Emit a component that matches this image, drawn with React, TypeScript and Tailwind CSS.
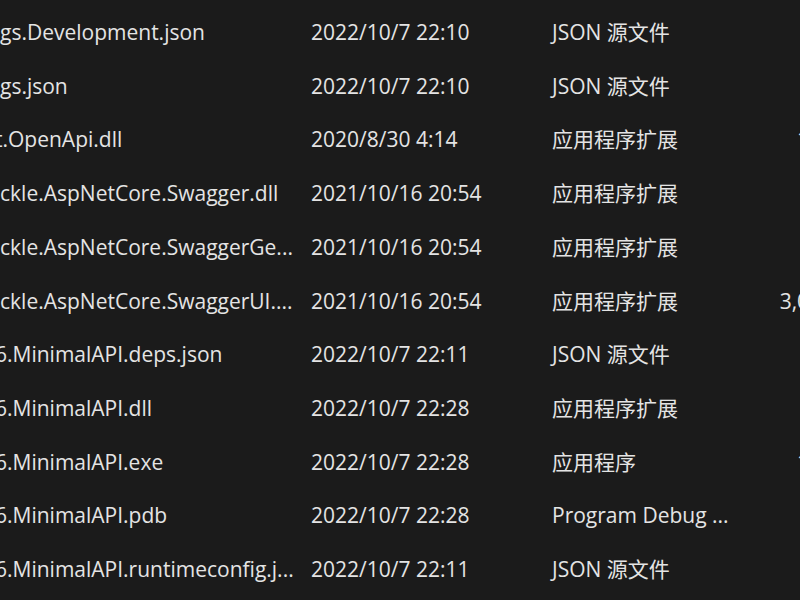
const rows = [
  { name: 'gs.Development.json', shift: 'ml-0', date: '2022/10/7 22:10', type: 'JSON 源文件', size: '1 KB' },
  { name: 'gs.json', shift: 'ml-0', date: '2022/10/7 22:10', type: 'JSON 源文件', size: '1 KB' },
  { name: 't.OpenApi.dll', shift: '-ml-[5px]', date: '2020/8/30 4:14', type: '应用程序扩展', size: '170 KB' },
  { name: 'ckle.AspNetCore.Swagger.dll', shift: 'ml-0', date: '2021/10/16 20:54', type: '应用程序扩展', size: '18 KB' },
  { name: 'ckle.AspNetCore.SwaggerGe...', shift: 'ml-0', date: '2021/10/16 20:54', type: '应用程序扩展', size: '89 KB' },
  { name: 'ckle.AspNetCore.SwaggerUI....', shift: 'ml-0', date: '2021/10/16 20:54', type: '应用程序扩展', size: '3,023 KB' },
  { name: '6.MinimalAPI.deps.json', shift: '-ml-[5px]', date: '2022/10/7 22:11', type: 'JSON 源文件', size: '3 KB' },
  { name: '6.MinimalAPI.dll', shift: '-ml-[5px]', date: '2022/10/7 22:28', type: '应用程序扩展', size: '12 KB' },
  { name: '6.MinimalAPI.exe', shift: '-ml-[5px]', date: '2022/10/7 22:28', type: '应用程序', size: '146 KB' },
  { name: '6.MinimalAPI.pdb', shift: '-ml-[5px]', date: '2022/10/7 22:28', type: 'Program Debug ...', size: '21 KB' },
  { name: '6.MinimalAPI.runtimeconfig.j...', shift: '-ml-[5px]', date: '2022/10/7 22:11', type: 'JSON 源文件', size: '1 KB' },
];

export default function App() {
  return (
    <div
      className="h-[600px] w-[800px] overflow-hidden bg-[#1b1b1b] pt-[6px] text-[21px] text-[#e4e4e4]"
      style={{ fontFamily: '"Open Sans", "Noto Sans CJK SC", sans-serif' }}
    >
      <div className="w-[900px]">
        {rows.map((r) => (
          <div key={r.name} className="flex h-[53.7px] items-center whitespace-nowrap">
            <div className="w-[311px] shrink-0 overflow-hidden">
              <span className={`${r.shift} block`}>{r.name}</span>
            </div>
            <div className="w-[241px] shrink-0">{r.date}</div>
            <div className="w-[200px] shrink-0">{r.type}</div>
            <div className="w-[113px] shrink-0 text-right">{r.size}</div>
          </div>
        ))}
      </div>
    </div>
  );
}
